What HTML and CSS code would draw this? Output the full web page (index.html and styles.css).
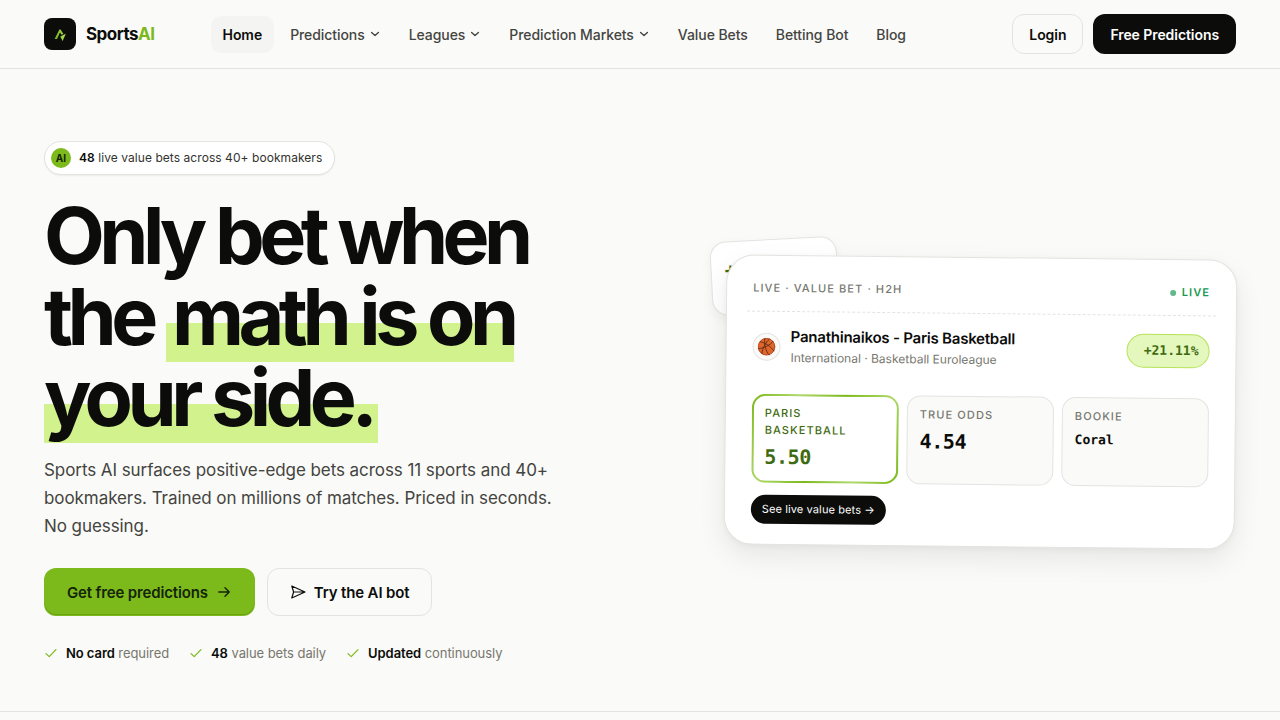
FILE: index.html
```html
<!DOCTYPE html>
<html lang="en">
<head>
<meta charset="utf-8">
<meta name="viewport" content="width=device-width, initial-scale=1">
<title>SportsAI</title>
<link rel="stylesheet" href="styles.css">
</head>
<body>
<header class="site-header">
  <a class="brand" href="#">
    <svg class="brand-mark" viewBox="0 0 32 32" aria-hidden="true">
      <defs><linearGradient id="bolt" x1="0" y1="0" x2="1" y2="0"><stop offset="0" stop-color="#6fae1c"/><stop offset="1" stop-color="#b5e655"/></linearGradient></defs>
      <rect width="32" height="32" rx="8" fill="#0c0c0a"/>
      <path d="M10.600 21 15.400 11.600 16.600 11.600 19.400 16 17.600 16.800 16 14.400 13 21zM21.800 15.800 18.600 23 16.200 18.400z" fill="url(#bolt)"/>
    </svg>
    <span class="brand-name">Sports<span class="brand-ai">AI</span></span>
  </a>
  <nav class="nav">
    <a class="nav-link nav-active" href="#">Home</a>
    <a class="nav-link" href="#">Predictions <svg class="chevron" viewBox="0 0 12 12"><path d="M2.600 4.500 6 7.500l3.400-3"/></svg></a>
    <a class="nav-link" href="#">Leagues <svg class="chevron" viewBox="0 0 12 12"><path d="M2.600 4.500 6 7.500l3.400-3"/></svg></a>
    <a class="nav-link" href="#">Prediction Markets <svg class="chevron" viewBox="0 0 12 12"><path d="M2.600 4.500 6 7.500l3.400-3"/></svg></a>
    <a class="nav-link" href="#">Value Bets</a>
    <a class="nav-link" href="#">Betting Bot</a>
    <a class="nav-link" href="#">Blog</a>
  </nav>
  <div class="account">
    <a class="btn btn-small btn-outline" href="#">Login</a>
    <a class="btn btn-small btn-dark" href="#">Free Predictions</a>
  </div>
</header>
<main class="hero">
  <section class="intro">
    <p class="badge"><span class="badge-dot">AI</span><span><b>48</b> live value bets across 40+ bookmakers</span></p>
    <h1 class="title">Only bet when the <span class="marked">math is on your side.</span></h1>
    <p class="lead">Sports AI surfaces positive-edge bets across 11 sports and 40+ bookmakers. Trained on millions of matches. Priced in seconds. No guessing.</p>
    <div class="actions">
      <a class="btn btn-large btn-green" href="#">Get free predictions
        <svg class="icon-arrow" viewBox="0 0 16 16"><path d="M2.800 8h10.400M9 3.800 13.200 8 9 12.200"/></svg></a>
      <a class="btn btn-large btn-outline" href="#">
        <svg class="icon-send" viewBox="0 0 16 16"><path d="M1.800 2 15 8 1.800 14 3.600 8zM3.600 8H15"/></svg>Try the AI bot</a>
    </div>
    <ul class="perks">
      <li class="perk"><svg class="check" viewBox="0 0 14 14"><path d="M2 7.600 5.200 10.600 12 3.600"/></svg><span><b>No card</b> required</span></li>
      <li class="perk"><svg class="check" viewBox="0 0 14 14"><path d="M2 7.600 5.200 10.600 12 3.600"/></svg><span><b>48</b> value bets daily</span></li>
      <li class="perk"><svg class="check" viewBox="0 0 14 14"><path d="M2 7.600 5.200 10.600 12 3.600"/></svg><span><b>Updated</b> continuously</span></li>
    </ul>
  </section>
  <section class="showcase">
    <div class="note">+</div>
    <article class="card">
      <div class="card-head">
        <span class="label">Live · Value Bet · H2H</span>
        <span class="live"><span class="live-dot"></span>Live</span>
      </div>
      <div class="match">
        <span class="sport">
          <svg class="ball" viewBox="0 0 20 20"><circle cx="10" cy="10" r="9.500" fill="#e0662a"/><g fill="none" stroke="#5a2c1c" stroke-width="1"><circle cx="10" cy="10" r="9.300" stroke="#b04a20"/><path d="M1.500 12C7 12 14 8 17 4M8 1c-1 6 1 14 5 18M3 4.500c5 1 12 5 15 10M13 1.500C9 5 5 12 5 17.500"/></g></svg>
        </span>
        <div class="match-text">
          <h2 class="match-name">Panathinaikos - Paris Basketball</h2>
          <p class="match-league">International · Basketball Euroleague</p>
        </div>
        <span class="edge">+21.11%</span>
      </div>
      <div class="tiles">
        <div class="tile tile-pick"><span class="label">Paris Basketball</span><strong class="value">5.50</strong></div>
        <div class="tile"><span class="label">True odds</span><strong class="value">4.54</strong></div>
        <div class="tile"><span class="label">Bookie</span><strong class="value value-name">Coral</strong></div>
      </div>
      <a class="more" href="#">See live value bets →</a>
    </article>
  </section>
</main>
</body>
</html>
```
FILE: styles.css
```css
* { box-sizing: border-box; }
body {
  margin: 0;
  background: #fafaf8;
  color: #0c0c0a;
  font-family: Inter, "Liberation Sans", sans-serif;
  font-size: 14px;
  letter-spacing: -0.005em;
}
a { color: inherit; text-decoration: none; }
p, h1, h2, ul { margin: 0; padding: 0; }
b { font-weight: 600; color: #0c0c0a; }
svg { flex: none; fill: none; stroke-linecap: round; stroke-linejoin: round; }

.site-header {
  display: flex;
  align-items: center;
  padding: 14px 44px;
  border-bottom: 1px solid #e3e3e0;
}
.brand { display: flex; align-items: center; gap: 10px; margin-right: 56px; }
.brand-mark { width: 32px; height: 32px; }
.brand-name { padding-bottom: 1px; font-size: 17px; font-weight: 700; letter-spacing: -0.03em; line-height: 20px; }
.brand-ai { color: #7cb91b; }
.nav { display: flex; gap: 4px; padding-top: 1px; }
.nav-link {
  display: flex;
  align-items: center;
  gap: 4px;
  padding: 9px 12px 8px;
  border-radius: 10px;
  line-height: 20px;
  font-weight: 500;
  color: #44443f;
  white-space: nowrap;
}
.nav-active { background: #f4f4f2; color: #0c0c0a; font-weight: 600; }
.chevron { width: 12px; height: 12px; margin-bottom: 2px; stroke: #44443f; stroke-width: 1.4; }
.account { display: flex; gap: 10px; margin-left: auto; }

.btn {
  display: inline-flex;
  align-items: center;
  justify-content: center;
  border: 1px solid transparent;
  border-radius: 12px;
  font-weight: 600;
  white-space: nowrap;
}
.btn-small { height: 40px; padding: 1px 16px 0; }
.btn-large { height: 48px; padding: 0 22px; font-size: 15px; letter-spacing: -0.01em; gap: 8px; }
.btn-outline { border-color: #e3e3e0; }
.btn-dark { background: #0c0c0a; color: #fff; }
.btn-green { background: #7cb91b; color: #14240a; box-shadow: inset 0 -1px 0 #6aa214; }
.icon-arrow, .icon-send { width: 16px; height: 16px; stroke: currentColor; stroke-width: 1.4; }
.icon-send { stroke-width: 1.2; }

.hero {
  display: grid;
  grid-template-columns: 1.2fr 1fr;
  gap: 64px;
  align-items: center;
  padding: 72px 44px 48px;
  border-bottom: 1px solid #e3e3e0;
}
.intro { display: flex; flex-direction: column; align-items: flex-start; }
.badge {
  display: flex;
  align-items: center;
  gap: 8px;
  height: 34px;
  padding: 0 12px 1px 6px;
  border: 1px solid #e3e3e0;
  border-radius: 17px;
  background: #fff;
  box-shadow: 0 1px 2px rgba(0, 0, 0, 0.06);
  font-size: 12px;
  letter-spacing: 0.005em;
  color: #33332f;
}
.badge-dot {
  display: grid;
  place-items: center;
  width: 20px;
  height: 20px;
  border-radius: 50%;
  background: #7cb91b;
  color: #14240a;
  font-size: 10px;
  font-weight: 700;
}
.title {
  max-width: 520px;
  margin-top: 20px;
  font-size: 79px;
  line-height: 81px;
  font-weight: 650;
  letter-spacing: -0.07em;
}
.marked {
  padding: 0 6px;
  background: linear-gradient(transparent 57%, #d1f28d 57%, #d1f28d 98%, transparent 98%);
}
.lead {
  max-width: 520px;
  margin-top: 18px;
  font-size: 17px;
  line-height: 28px;
  color: #44443f;
}
.actions { display: flex; gap: 12px; margin-top: 28px; }
.perks { display: flex; gap: 20px; margin-top: 27px; list-style: none; }
.perk { display: flex; align-items: center; gap: 8px; font-size: 13px; line-height: 20px; color: #77776f; }
.check { width: 14px; height: 14px; stroke: #7cb91b; stroke-width: 1.2; }

.showcase { position: relative; width: 100%; max-width: 511px; justify-self: end; }
.note {
  position: absolute;
  top: -18px;
  left: -14px;
  width: 127px;
  height: 74px;
  padding: 16px 13px;
  border: 1px solid #e3e3e0;
  border-radius: 16px;
  background: #fff;
  box-shadow: 0 4px 12px rgba(0, 0, 0, 0.05);
  transform: rotate(-3deg);
  font: 700 20px "DejaVu Sans Mono", monospace;
  color: #3f6b10;
}
.card {
  position: relative;
  padding: 20px;
  border: 1px solid #e3e3e0;
  border-radius: 28px;
  background: #fff;
  box-shadow: 0 12px 28px rgba(0, 0, 0, 0.08), 0 2px 6px rgba(0, 0, 0, 0.04);
  letter-spacing: 0;
  transform: rotate(0.6deg);
}
.card-head {
  display: flex;
  align-items: center;
  justify-content: space-between;
  padding: 4px 6px 14px;
  border-bottom: 1px dashed #e3e3e0;
}
.label {
  font-size: 11px;
  line-height: 17px;
  font-weight: 550;
  letter-spacing: 0.1em;
  text-transform: uppercase;
  color: #77776f;
}
.live {
  display: flex;
  align-items: center;
  gap: 6px;
  font-size: 11px;
  line-height: 17px;
  font-weight: 600;
  letter-spacing: 0.1em;
  text-transform: uppercase;
  color: #179a50;
}
.live-dot { width: 6px; height: 6px; border-radius: 50%; background: #63b98b; }
.match { display: flex; align-items: center; gap: 10px; padding: 14px 6px 26px; }
.sport {
  display: grid;
  place-items: center;
  width: 28px;
  height: 28px;
  border: 1px solid #e3e3e0;
  border-radius: 50%;
  background: #fafaf8;
}
.ball { width: 18px; height: 18px; }
.match-text { flex: 1; }
.match-name { font-size: 15px; line-height: 22px; font-weight: 600; letter-spacing: -0.015em; }
.match-league { font-size: 12px; line-height: 20px; color: #77776f; }
.edge {
  padding: 8px 10px 8px 16px;
  border: 1px solid #b5e35a;
  border-radius: 17px;
  background: #e4f7bd;
  font: 700 13px/16px "DejaVu Sans Mono", monospace;
  color: #3f6b10;
}
.tiles { display: grid; grid-template-columns: repeat(3, 1fr); gap: 8px; padding: 0 6px; }
.tile {
  display: flex;
  flex-direction: column;
  gap: 4px;
  min-height: 89px;
  padding: 10px 12px 8px;
  border: 1px solid #e3e3e0;
  border-radius: 14px;
  background: #fafaf8;
}
.tile-pick {
  padding: 9px 11px 7px;
  border: 2px solid transparent;
  background:
    linear-gradient(#fff, #fff) padding-box,
    linear-gradient(115deg, #7cb91b, #b0d86c 25%, #7cb91b 50%, #b0d86c 75%, #7cb91b) border-box;
}
.tile-pick .label, .tile-pick .value { color: #3f6b10; }
.value { font: 700 20px/28px "DejaVu Sans Mono", monospace; letter-spacing: -0.02em; }
.value-name { font-size: 13px; line-height: 22px; letter-spacing: 0; }
.more {
  display: inline-block;
  margin: 12px 6px 0;
  padding: 0 11px;
  border-radius: 15px;
  background: #0c0c0a;
  color: #fff;
  font-size: 11px;
  line-height: 29px;
  letter-spacing: 0.01em;
}
```
